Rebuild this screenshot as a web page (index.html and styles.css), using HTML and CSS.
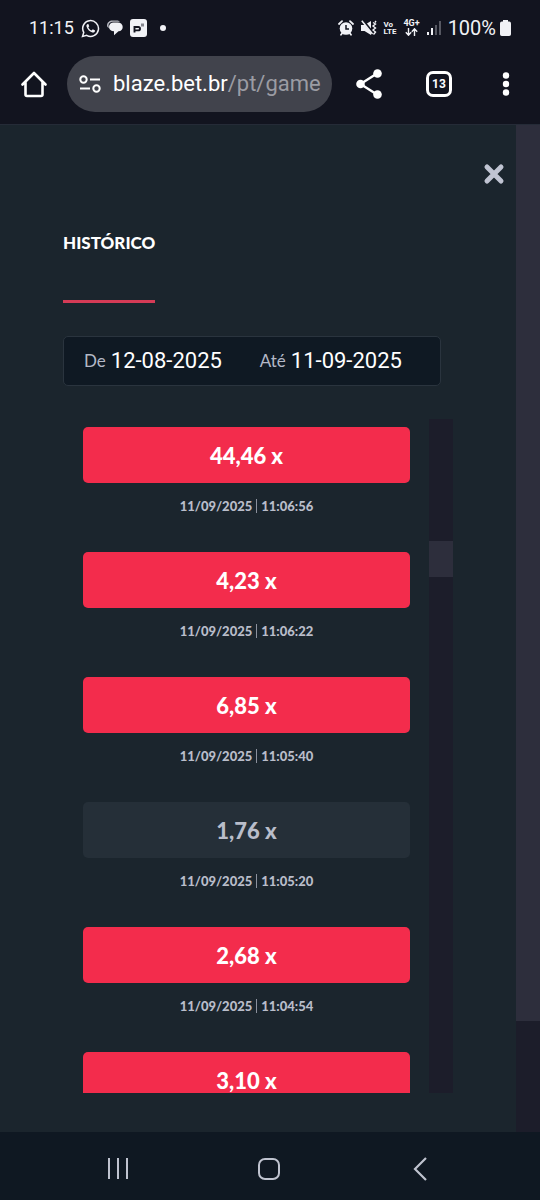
FILE: index.html
```html
<!DOCTYPE html>
<html lang="pt-BR">
<head>
<meta charset="utf-8">
<meta name="viewport" content="width=device-width, initial-scale=1">
<title>Histórico</title>
<link rel="stylesheet" href="styles.css">
</head>
<body>
<header class="status-bar">
  <div class="status-group">
    <span class="clock">11:15</span>
    <svg width="19" height="19" viewBox="0 0 20 20" fill="none" stroke="#f1f2f6" stroke-width="1.6" aria-hidden="true"><path d="M1.6 18.4l1.3-4.3A8.3 8.3 0 1 1 6 17.2z"/><path d="M7 5.3c-1 .4-1.5 1.500-1.200 2.700.9 3.200 3 5.300 6.200 6.200 1.200.3 2.300-.2 2.700-1.300l.1-.9-2.400-1.200-1.200 1.300c-1.700-.7-2.800-1.800-3.500-3.400l1-1.100-1-2.300z" fill="#f1f2f6" stroke="none"/></svg>
    <svg width="16" height="16" viewBox="0 0 16 16" aria-hidden="true"><path d="M0 5.500C0 2.500 2.500.5 5.500.5h4c1.500 0 2.500.3 3.500 1.200H6C3 1.700 1.500 3.500 1.500 5.500L2 8C.7 7.500 0 6.800 0 5.500z" fill="#b6b8c0"/><path d="M6.500 2.500h4.200c3 0 5 1.900 5 4.400 0 2.400-1.700 4.200-4.200 4.400L7 15.300v-4C4 11.200 2 9.300 2 6.900c0-2.500 1.900-4.400 4.500-4.400z" fill="#f1f2f6"/></svg>
    <svg width="17" height="18" viewBox="0 0 17 18" aria-hidden="true"><rect width="17" height="18" rx="3" fill="#f1f2f6"/><path d="M4.500 13.500V8h3.800a1.500 1.500 0 0 1 0 3.400H4.500" fill="none" stroke="#12141f" stroke-width="1.900"/><path d="M11 4.500h3v3h-3z" fill="#85878f"/></svg>
    <span class="status-dot"></span>
  </div>
  <div class="status-group">
    <svg width="16" height="16" viewBox="0 0 16 16" aria-hidden="true"><g stroke="#f1f2f6" stroke-width="1.800" stroke-linecap="round"><path d="M1 4l3-2.800M15 4l-3-2.800M3 14.800l1.500-2M13 14.800l-1.500-2"/></g><circle cx="8" cy="8.500" r="6.300" fill="#f1f2f6"/><path d="M8 5v4h3" fill="none" stroke="#12141f" stroke-width="1.500"/></svg>
    <svg width="16" height="16" viewBox="0 0 16 16" aria-hidden="true"><path d="M0 5h3.500L10 1v14l-6.500-4H0z" fill="#f1f2f6"/><path d="M1.500 0L12 13" stroke="#12141f" stroke-width="2.600"/><path d="M.8.800L11.500 14" stroke="#f1f2f6" stroke-width="1.500"/><path d="M12 2.500l2.500 1.500L12 6l2.500 2-2.500 2 2.500 2-2 2.500M15 1l-1 1.500" fill="none" stroke="#f1f2f6" stroke-width="1.400"/></svg>
    <span class="volte"><span>Vo</span><span>LTE</span></span>
    <span class="network"><span>4G+</span><svg width="13" height="8" viewBox="0 0 13 8" fill="none" stroke="#f1f2f6" stroke-width="1.400" aria-hidden="true"><path d="M3.500 0v7M.8 4.300l2.700 2.900 2.700-2.900M9.500 8V1M6.800 3.700L9.500.8l2.700 2.900"/></svg></span>
    <svg width="14" height="15" viewBox="0 0 14 15" aria-hidden="true"><path d="M0 11h2v3H0zM4 7h2v7H4z" fill="#f1f2f6"/><path d="M8 4h2v10H8zM12 0h2v14h-2z" fill="#565862"/></svg>
    <span class="battery"><span class="battery-level">100%</span>
    <svg width="11" height="16" viewBox="0 0 11 16" aria-hidden="true"><path d="M3 0h5v1.600h1.200A1.800 1.800 0 0 1 11 3.400v10.800a1.800 1.800 0 0 1-1.800 1.800H1.800A1.800 1.800 0 0 1 0 14.200V3.400a1.800 1.800 0 0 1 1.800-1.800H3z" fill="#f1f2f6"/></svg></span>
  </div>
</header>

<nav class="browser-bar" aria-label="Navegador">
  <button class="icon-button" aria-label="Página inicial"><svg width="26" height="28" viewBox="0 0 26 28" fill="none" stroke="#fff" stroke-width="2.600" stroke-linejoin="round" stroke-linecap="round"><path d="M1.500 14.500L13 3l11.500 11.500M4.500 12.500v12a1.500 1.500 0 0 0 1.500 1.500h14a1.500 1.500 0 0 0 1.500-1.500v-12"/></svg></button>
  <button class="address">
    <svg width="22" height="18" viewBox="0 0 22 18" fill="none" stroke="#fff" stroke-width="2"><circle cx="4.500" cy="4.500" r="3.200"/><path d="M11 4.500h10M1 13.500h10"/><circle cx="17.500" cy="13.500" r="3.200"/></svg>
    <span class="address-text">blaze.bet.br<span class="address-path">/pt/game</span></span>
  </button>
  <div class="browser-actions">
    <button class="icon-button" aria-label="Compartilhar"><svg width="26" height="30" viewBox="0 0 26 30"><path d="M21 4.500L4.500 15 21 25.500" fill="none" stroke="#fff" stroke-width="2.400"/><g fill="#fff"><circle cx="21.500" cy="4.500" r="4.300"/><circle cx="4.500" cy="15" r="4.300"/><circle cx="21.500" cy="25.500" r="4.300"/></g></svg></button>
    <button class="tab-count" aria-label="13 guias abertas">13</button>
    <button class="icon-button menu-button" aria-label="Mais opções"><svg width="8" height="24" viewBox="0 0 8 24" fill="#fff"><circle cx="4" cy="3.500" r="3.200"/><circle cx="4" cy="12" r="3.200"/><circle cx="4" cy="20.500" r="3.200"/></svg></button>
  </div>
</nav>

<div class="viewport">
  <main class="page">
    <div class="page-top">
      <button class="icon-button" aria-label="Fechar"><svg width="22" height="22" viewBox="0 0 22 22" stroke="#c0c4d2" stroke-width="5" stroke-linecap="round"><path d="M4 4l14 14M18 4L4 18"/></svg></button>
    </div>
    <div class="content">
      <button class="tab">HISTÓRICO</button>
      <form class="dates">
        <label class="date">De <input class="date-input" type="text" value="12-08-2025"></label>
        <label class="date">Até <input class="date-input" type="text" value="11-09-2025"></label>
      </form>
      <div class="history">
        <ul class="results">
          <li><div class="value">44,46 x</div><div class="stamp">11/09/2025<span class="divider"></span>11:06:56</div></li>
          <li><div class="value">4,23 x</div><div class="stamp">11/09/2025<span class="divider"></span>11:06:22</div></li>
          <li><div class="value">6,85 x</div><div class="stamp">11/09/2025<span class="divider"></span>11:05:40</div></li>
          <li><div class="value value-low">1,76 x</div><div class="stamp">11/09/2025<span class="divider"></span>11:05:20</div></li>
          <li><div class="value">2,68 x</div><div class="stamp">11/09/2025<span class="divider"></span>11:04:54</div></li>
          <li><div class="value">3,10 x</div></li>
        </ul>
        <div class="track"><div class="thumb list-thumb"></div></div>
      </div>
    </div>
  </main>
  <div class="track"><div class="thumb page-thumb"></div></div>
</div>

<nav class="system-bar" aria-label="Sistema">
  <button class="icon-button" aria-label="Recentes"><svg width="22" height="24" viewBox="0 0 22 24" stroke="#bfc3cf" stroke-width="2"><path d="M2 1v21M11 1v21M20 1v21"/></svg></button>
  <button class="icon-button" aria-label="Início"><svg width="24" height="24" viewBox="0 0 24 24" fill="none" stroke="#bfc3cf" stroke-width="2"><rect x="2" y="2" width="20" height="20" rx="6"/></svg></button>
  <button class="icon-button" aria-label="Voltar"><svg width="24" height="26" viewBox="0 0 24 26" fill="none" stroke="#bfc3cf" stroke-width="2.200"><path d="M17 2L6 13l11 11"/></svg></button>
</nav>
</body>
</html>
```
FILE: styles.css
```css
* {
  box-sizing: border-box;
}

body {
  margin: 0;
  height: 100vh;
  display: flex;
  flex-direction: column;
  background: #12141f;
  color: #fff;
  font-family: Lato, "Liberation Sans", sans-serif;
}

button {
  margin: 0;
  padding: 0;
  border: 0;
  background: none;
  color: inherit;
  font: inherit;
  text-align: left;
}

svg {
  display: block;
  flex: none;
}

.icon-button {
  display: flex;
  flex: none;
}

.status-bar {
  display: flex;
  justify-content: space-between;
  align-items: center;
  height: 56px;
  padding: 0 29px;
  font-family: Roboto, sans-serif;
  color: #f1f2f6;
}

.status-group {
  display: flex;
  align-items: center;
  gap: 7px;
}

.clock {
  font-size: 18px;
  line-height: 24px;
}

.battery-level {
  font-size: 20px;
  line-height: 24px;
}

.status-dot {
  width: 6px;
  height: 6px;
  margin-left: 6px;
  border-radius: 50%;
  background: #f1f2f6;
}

.volte,
.network {
  display: flex;
  flex-direction: column;
  align-items: center;
  font-weight: 700;
  font-size: 8px;
  line-height: 7px;
}

.volte {
  align-items: flex-start;
}

.network {
  gap: 1px;
  font-size: 9px;
}

.battery {
  display: flex;
  align-items: center;
  gap: 4px;
}

.browser-bar {
  display: flex;
  align-items: center;
  height: 69px;
  padding: 0 30px 12px 21px;
  border-bottom: 1px solid #252b37;
  font-family: Roboto, sans-serif;
}

.address {
  flex: 1;
  min-width: 0;
  display: flex;
  align-items: center;
  gap: 12px;
  height: 56px;
  margin: 0 24px 0 20px;
  padding: 0 10px 0 12px;
  border-radius: 28px;
  background: #41434c;
}

.address-text {
  white-space: nowrap;
  font-size: 22px;
  line-height: 32px;
}

.address-path {
  color: #9b9ca3;
}

.browser-actions {
  display: flex;
  align-items: center;
  gap: 44px;
}

.menu-button {
  margin-left: 6px;
}

.tab-count {
  width: 26px;
  height: 26px;
  border: 3px solid #fff;
  border-radius: 7px;
  font-size: 12px;
  font-weight: 700;
  line-height: 20px;
  text-align: center;
}

.viewport {
  flex: 1;
  min-height: 0;
  display: flex;
  background: #1b252d;
}

.page {
  flex: 1;
  min-width: 0;
  display: flex;
  flex-direction: column;
}

.page-top {
  display: flex;
  justify-content: flex-end;
  padding: 38px 11px 0;
}

.content {
  flex: 1;
  min-height: 0;
  display: flex;
  flex-direction: column;
  align-items: flex-start;
  padding: 48px 63px 39px;
}

.tab {
  height: 70px;
  padding-bottom: 48px;
  border-bottom: 3px solid #d53b56;
  font-size: 17px;
  font-weight: 900;
  line-height: 20px;
}

.dates {
  display: flex;
  align-items: center;
  gap: 24px;
  align-self: stretch;
  height: 50px;
  margin: 33px 12px 33px 0;
  padding: 0 20px;
  border: 1px solid #2a343e;
  border-radius: 5px;
  background: #0f1923;
}

.date {
  display: flex;
  align-items: center;
  gap: 5px;
  color: #b3b8c6;
  font-size: 17px;
  line-height: 24px;
}

.date-input {
  width: 125px;
  padding: 0;
  border: 0;
  background: none;
  color: #fff;
  font-family: Roboto, sans-serif;
  font-size: 22px;
  line-height: 28px;
}

.history {
  flex: 1;
  min-height: 0;
  align-self: stretch;
  display: flex;
  overflow: hidden;
}

.results {
  flex: 1;
  display: flex;
  flex-direction: column;
  gap: 35px;
  margin: 0;
  padding: 8px 19px 0 20px;
  list-style: none;
}

.value {
  height: 56px;
  border-radius: 5px;
  background: #f32c4c;
  font-size: 22px;
  font-weight: 900;
  line-height: 58px;
  text-align: center;
}

.value-low {
  background: #252f38;
  color: #b9bdca;
}

.stamp {
  display: flex;
  justify-content: center;
  align-items: center;
  padding-top: 12px;
  color: #b9bdca;
  font-size: 13px;
  font-weight: 900;
  line-height: 22px;
}

.divider {
  width: 1px;
  height: 14px;
  margin: 0 4px;
  background: #8c919d;
}

.track {
  display: flex;
  flex-direction: column;
  flex: none;
  width: 24px;
  background: #1c1d2a;
}

.thumb {
  background: #2d2e3c;
}

.page-thumb {
  height: 89%;
}

.list-thumb {
  height: 36px;
  margin-top: 122px;
}

.system-bar {
  display: flex;
  align-items: center;
  justify-content: space-between;
  height: 68px;
  padding: 5px 107px 0 107px;
  background: #0f1822;
}
```
